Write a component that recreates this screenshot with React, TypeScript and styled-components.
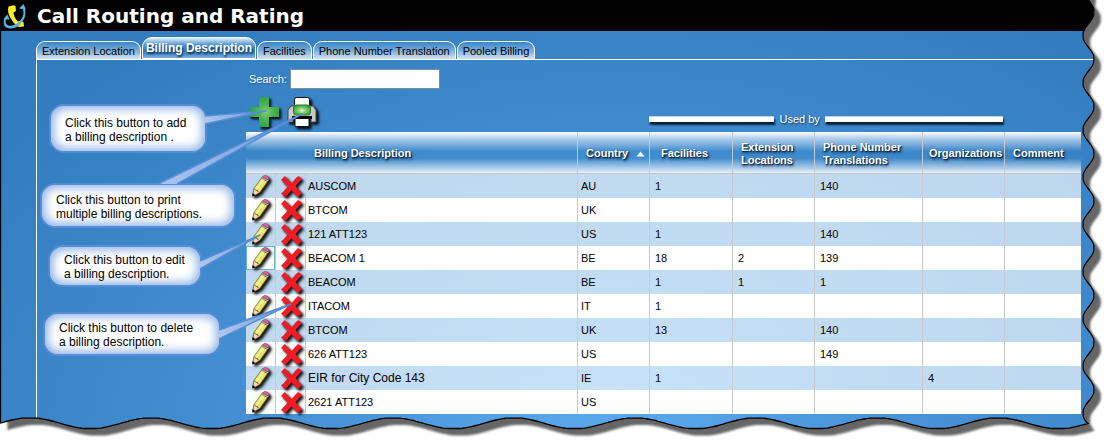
import React, { useLayoutEffect, useRef, useState } from "react";
import styled, { createGlobalStyle } from "styled-components";

const GlobalStyle = createGlobalStyle`
  * { box-sizing: border-box; }
  body { margin: 0; background: #fff; }
  body, button, input { font-family: "Liberation Sans", Arial, sans-serif; }
`;

/* ---------- page frame ---------- */

const Page = styled.main`
  position: relative;
  padding-bottom: 32px;
  overflow: hidden;
  background: radial-gradient(ellipse 68% 112% at 55% 100%, #5caaee 0%, #4a95d9 35%, #3e8acd 65%, #327dc0 100%);
`;

const TitleBar = styled.header`
  display: flex;
  align-items: center;
  gap: 10px;
  height: 31px;
  padding: 0 3px;
  background: #000;
`;

const Title = styled.h1`
  margin: 0;
  color: #fff;
  font: bold 20px/24px Verdana, "DejaVu Sans", sans-serif;
`;

const Tabs = styled.nav`
  display: flex;
  align-items: flex-end;
  gap: 1px;
  height: 28px;
  margin-left: 36px;
`;

const Tab = styled.a<{ $active?: boolean }>`
  height: ${(p) => (p.$active ? 22 : 18)}px;
  padding: ${(p) => (p.$active ? "2px 3px 0" : "1px 5px 0")};
  border: 1px solid #fff;
  border-bottom: ${(p) => (p.$active ? "1px solid #fff" : "0")};
  border-radius: ${(p) => (p.$active ? "10px 10px 0 0" : "9px 9px 0 0")};
  background: ${(p) =>
    p.$active
      ? "linear-gradient(#e4eef8 0%, #5c9bd4 32%, #2f78bb 65%, #7fb0de 100%)"
      : "linear-gradient(#3c85c6 0%, #72a7d8 45%, #d5e4f3 100%)"};
  color: ${(p) => (p.$active ? "#fff" : "#000")};
  font-size: ${(p) => (p.$active ? 12 : 11)}px;
  font-weight: ${(p) => (p.$active ? "bold" : "normal")};
  line-height: 16px;
  text-shadow: ${(p) => (p.$active ? "1px 2px 2px #0a2b50" : "none")};
  text-decoration: none;
  white-space: nowrap;
`;

const Panel = styled.section`
  margin-left: 36px;
  margin-bottom: -32px;
  padding: 9px 30px 32px 209px;
  border-top: 1px solid #fff;
  border-left: 1px solid #fff;
`;

/* ---------- search and actions ---------- */

const SearchRow = styled.form`
  display: flex;
  align-items: center;
  gap: 3px;
  padding-left: 3px;
`;

const SearchLabel = styled.label`
  color: #fff;
  font-size: 11px;
  text-shadow: 1px 1px 1px #2a5f94;
`;

const SearchInput = styled.input`
  width: 150px;
  height: 20px;
  padding: 1px 4px;
  border: 1px solid #7d8f9f;
  background: #fff;
  font-size: 11px;
`;

const Toolbar = styled.div`
  display: flex;
  align-items: flex-start;
  gap: 8px;
  height: 43px;
  padding: 8px 0 0 3px;
`;

const IconButton = styled.button`
  display: block;
  padding: 0;
  border: 0;
  background: none;
  svg { display: block; overflow: visible; }
`;

const UsedBy = styled.div`
  display: flex;
  align-items: center;
  gap: 5px;
  width: 354px;
  margin: 14px 78px 0 auto;
  color: #fff;
  font-size: 11px;
  line-height: 16px;
  text-shadow: 1px 1px 2px #0d2f52;
`;

const Bar = styled.span<{ $grow: number }>`
  flex: ${(p) => p.$grow} 1 0;
  height: 6px;
  border-top: 1px solid #b9d3ec;
  background: #fff;
  box-shadow: 1px 3px 2px #0a2138;
`;

/* ---------- table ---------- */

const Table = styled.table`
  width: 100%;
  border-collapse: separate;
  border-spacing: 0;
  table-layout: fixed;
  font-size: 11px;
`;

const HeadRow = styled.tr`
  height: 42px;
  background: linear-gradient(#ffffff 0%, rgba(255, 255, 255, 0.62) 14%, rgba(255, 255, 255, 0) 46%, rgba(255, 255, 255, 0) 62%, rgba(255, 255, 255, 0.62) 88%, #f4f8fc 100%);
`;

const HeadCell = styled.th<{ $indent?: number }>`
  padding: 2px 2px 0 ${(p) => p.$indent ?? 8}px;
  border-right: 1px solid #c3c9ce;
  border-bottom: 1px solid #c3c9ce;
  color: #fff;
  font-weight: bold;
  line-height: 13px;
  text-align: left;
  text-shadow: 1px 1px 1px #0b2440, 1px 2px 3px #0b2440;
  &:last-child { border-right: 0; }
`;

const SortHeading = styled.span`
  display: flex;
  align-items: center;
  justify-content: space-between;
  padding-right: 2px;
`;

const Row = styled.tr<{ $shaded: boolean }>`
  height: 24px;
  background: ${(p) => (p.$shaded ? "rgba(255, 255, 255, 0.67)" : "#fff")};
`;

const Cell = styled.td<{ $indent?: number; $size?: number }>`
  padding: 0 0 0 ${(p) => p.$indent ?? 5}px;
  border-right: 1px solid #c6cbcf;
  color: #000;
  font-size: ${(p) => p.$size ?? 11}px;
  line-height: 14px;
  white-space: nowrap;
  &:last-child { border-right: 0; }
`;

const IconCell = styled.td<{ $selected?: boolean }>`
  padding: 0 0 0 5px;
  border-right: 1px solid #c6cbcf;
  box-shadow: ${(p) => (p.$selected ? "inset 0 0 0 1px #69b7c6" : "none")};
`;

/* ---------- callouts ---------- */

const CalloutBox = styled.aside<{ $x: number; $y: number; $w: number; $h: number }>`
  position: absolute;
  left: ${(p) => p.$x}px;
  top: ${(p) => p.$y}px;
  width: ${(p) => p.$w}px;
  height: ${(p) => p.$h}px;
  padding: 2px 0 0 14px;
  display: flex;
  align-items: center;
  border: 2px solid #568cd8;
  border-radius: 15px;
  background: #fff;
  box-shadow: inset 0 0 10px 3px #8fb3e6;
  color: #000;
  font-size: 12px;
  line-height: 14px;
  white-space: pre-line;
  pointer-events: none;
  svg {
    position: absolute;
    left: -2px;
    top: -2px;
    width: 1px;
    height: 1px;
    overflow: visible;
  }
`;

type Point = [number, number];

function Callout({ x, y, w, h, base, tip, text }: {
  x: number; y: number; w: number; h: number; base: [Point, Point]; tip: Point; text: string;
}) {
  const [a, b] = base;
  const id = `tail-${x}-${y}`;
  const edge = `M${a[0]} ${a[1]}L${tip[0]} ${tip[1]}L${b[0]} ${b[1]}`;
  return (
    <CalloutBox $x={x} $y={y} $w={w} $h={h}>
      <svg aria-hidden="true">
        <defs>
          <linearGradient id={id} gradientUnits="userSpaceOnUse" x1={a[0]} y1={a[1]} x2={tip[0]} y2={tip[1]}>
            <stop offset="0" stopColor="#adc7ed" />
            <stop offset="0.6" stopColor="#84a9e1" />
            <stop offset="1" stopColor="#4f86d6" />
          </linearGradient>
        </defs>
        <path d={edge + "Z"} fill={`url(#${id})`} />
        <path d={edge} fill="none" stroke="#568cd8" strokeWidth="1.5" strokeLinejoin="round" />
      </svg>
      <span>{text}</span>
    </CalloutBox>
  );
}

/* ---------- torn paper edge ---------- */

const TornLayer = styled.svg`
  position: absolute;
  inset: 0;
  width: 100%;
  height: 100%;
  pointer-events: none;
`;

/* Cosine wave with flattened crests, from -1 to 1, with a crest at t = peak. */
function wave(t: number, peak: number, period: number, clip: number) {
  const c = Math.cos(((t - peak) / period) * 2 * Math.PI);
  return Math.max(-clip, Math.min(clip, c)) / clip;
}

function tornOutline(w: number, h: number) {
  const cornerX = w - 23;
  const cornerY = h - 23;
  const points: string[] = ["0.5 -20"];
  points.push(`${w - 21} -20`);
  for (let y = 0; y < cornerY; y += 1) {
    points.push(`${(w - 22.5 + 5.3 * wave(y, 12, 47.2, 0.92)).toFixed(1)} ${y}`);
  }
  for (let x = cornerX; x > 0; x -= 2) {
    points.push(`${x} ${(h - 22.7 - 5.2 * wave(x, 30, 121, 0.94)).toFixed(1)}`);
  }
  points.push(`0.5 ${cornerY}`);
  return `M${points.join("L")}Z`;
}

function TornEdge() {
  const ref = useRef<SVGSVGElement>(null);
  const [size, setSize] = useState({ w: 0, h: 0 });
  useLayoutEffect(() => {
    const node = ref.current;
    if (!node) return;
    const measure = () => {
      const r = node.getBoundingClientRect();
      setSize({ w: Math.round(r.width), h: Math.round(r.height) });
    };
    measure();
    const observer = new ResizeObserver(measure);
    observer.observe(node);
    return () => observer.disconnect();
  }, []);
  const { w, h } = size;
  const outline = w ? tornOutline(w, h) : "";
  const outside = `M0 -30H${w}V${h}H0Z${outline}`;
  return (
    <TornLayer ref={ref} aria-hidden="true">
      {w > 0 && (
        <>
          <defs>
            <clipPath id="outside"><path d={outside} clipRule="evenodd" /></clipPath>
            <filter id="soft" x="-5%" y="-5%" width="110%" height="110%"><feGaussianBlur stdDeviation="1.2" /></filter>
          </defs>
          <path d={outside} fill="#fff" fillRule="evenodd" />
          <g clipPath="url(#outside)">
            <path d={outline} transform="translate(7 7)" fill="#666" filter="url(#soft)" />
          </g>
          <path d={outline} fill="none" stroke="#000" strokeWidth="1.3" />
        </>
      )}
    </TornLayer>
  );
}

/* ---------- icons ---------- */

const Shadowed = styled.svg`
  display: block;
  overflow: visible;
  filter: drop-shadow(2px 2px 1px rgba(0, 0, 0, 0.85)) drop-shadow(1px 1px 1px rgba(0, 0, 0, 0.35));
`;

const Logo = () => (
  <svg width="24" height="26" viewBox="0 0 24 26" aria-hidden="true">
    <path d="M5.500 3.500C4.500 7 5 11 7.500 15C9.500 18.500 12 21.500 15.500 24L21 23.500L20.500 19L17.500 17.500L15 18.500C12.500 16.500 10.800 13 10.500 9.500L13 8L12.500 3L10 2.200Z" fill="#f7ea2c" />
    <path d="M3.500 14.500C0.500 18 1 22.500 5.500 23.500C11 24.500 18 20.500 20.500 14.500C22 11 21.500 7.500 20.500 4.500" fill="none" stroke="#59b4df" strokeWidth="2" />
    <path d="M0.500 16L4.500 11.500L6.500 16.500Z M16 5.500L20.500 1L23 6.500Z" fill="#59b4df" />
    <path d="M1.500 22C5 26 12.500 25.500 17 20.500" fill="none" stroke="#59b4df" strokeWidth="1.500" />
  </svg>
);

const PlusIcon = () => (
  <Shadowed width="30" height="30" viewBox="0 0 30 30" aria-hidden="true">
    <defs>
      <radialGradient id="plus" cx="0.55" cy="0.5" r="0.55">
        <stop offset="0" stopColor="#86cd78" />
        <stop offset="0.45" stopColor="#4cb550" />
        <stop offset="1" stopColor="#27a34b" />
      </radialGradient>
    </defs>
    <path d="M10 0H20V10H30V20H20V30H10V20H0V10H10Z" fill="url(#plus)" />
  </Shadowed>
);

const PrinterIcon = () => (
  <Shadowed width="30" height="30" viewBox="0 0 30 30" aria-hidden="true">
    <defs>
      <radialGradient id="lamp" cx="0.5" cy="0.55" r="0.6">
        <stop offset="0" stopColor="#e4f6dc" />
        <stop offset="0.4" stopColor="#85ce6b" />
        <stop offset="1" stopColor="#2f9b34" />
      </radialGradient>
    </defs>
    <path d="M4 9H26L29 13V25H24V20H6V25H1V13Z" fill="#c9c9cb" stroke="#4a4a4d" />
    <rect x="7.500" y="0.500" width="15" height="9" rx="2" fill="#fff" stroke="#111" />
    <rect x="6.500" y="8" width="17" height="10" rx="3" fill="url(#lamp)" stroke="#2a7a2d" />
    <rect x="5" y="19" width="20" height="3" fill="#000" />
    <rect x="8" y="21.500" width="14" height="8" rx="1" fill="#fff" stroke="#111" />
  </Shadowed>
);

const PencilIcon = () => (
  <Shadowed width="20" height="22" viewBox="0 0 20 22" aria-hidden="true">
    <path d="M3 13.500L8.500 17.500L3.500 20.500L1.800 19.500Z" fill="#f5d3b0" stroke="#6e5a3a" strokeWidth="0.800" />
    <path d="M3 13.500L10.500 3L16.500 6.500L8.700 17.500C7 17.200 7 16 6.500 15.500C5.500 15.500 4 15 3 13.500Z" fill="#eae567" stroke="#77722a" strokeWidth="0.800" />
    <path d="M5.500 14L12.800 4.500" stroke="#fbf8b0" strokeWidth="1.500" />
    <path d="M10.500 3.200L11.800 1.600L17.800 5L16.600 6.800Z" fill="#a9b2b4" stroke="#555" strokeWidth="0.500" />
    <path d="M11.600 2C12.500 0.300 14.200 0 16 1C18 2.200 18.500 3.500 17.600 5.300Z" fill="#e0679b" stroke="#7d3b56" strokeWidth="0.600" />
    <path d="M1.600 18L4.500 20.200L1.200 21.600Z" fill="#000" />
  </Shadowed>
);

const DeleteIcon = () => (
  <Shadowed width="21" height="21" viewBox="0 0 21 21" aria-hidden="true">
    <path d="M3.800 0C6 2.500 8 5 10.500 7C13 4.500 14.500 2 17.500 0L21 3C18.500 5.500 16.500 7.500 14.500 10.200C16.500 12.500 18.500 15 21 17L17 21C14.500 19 12.500 16.500 10.300 14.200C8.500 16.500 6.500 19 4 21L0 17.500C2.500 15.500 4.500 13 6.500 10.500C4.500 8 2.500 6 0 4Z" fill="#ee1c24" />
  </Shadowed>
);

const SortIcon = () => (
  <svg width="9" height="6" viewBox="0 0 9 6" aria-hidden="true">
    <path d="M4.500 0.500L8.500 5.500H0.500Z" fill="#fff" />
  </svg>
);

/* ---------- data ---------- */

type Billing = {
  name: string; country: string; facilities?: string; extensions?: string;
  translations?: string; organizations?: string; selected?: boolean; large?: boolean;
};

const rows: Billing[] = [
  { name: "AUSCOM", country: "AU", facilities: "1", translations: "140" },
  { name: "BTCOM", country: "UK" },
  { name: "121 ATT123", country: "US", facilities: "1", translations: "140" },
  { name: "BEACOM 1", country: "BE", facilities: "18", extensions: "2", translations: "139", selected: true },
  { name: "BEACOM", country: "BE", facilities: "1", extensions: "1", translations: "1" },
  { name: "ITACOM", country: "IT", facilities: "1" },
  { name: "BTCOM", country: "UK", facilities: "13", translations: "140" },
  { name: "626 ATT123", country: "US", translations: "149" },
  { name: "EIR for City Code 143", country: "IE", facilities: "1", organizations: "4", large: true },
  { name: "2621 ATT123", country: "US" },
];

const tabs = ["Extension Location", "Billing Description", "Facilities", "Phone Number Translation", "Pooled Billing"];
const columnWidths = [30, 30, undefined, 72, 83, 82, 108, 82, 76];

export default function App() {
  return (
    <>
      <GlobalStyle />
      <Page>
        <TitleBar>
          <Logo />
          <Title>Call Routing and Rating</Title>
        </TitleBar>
        <Tabs>
          {tabs.map((t) => (
            <Tab key={t} href="#" $active={t === "Billing Description"}>{t}</Tab>
          ))}
        </Tabs>
        <Panel>
          <SearchRow>
            <SearchLabel htmlFor="search">Search:</SearchLabel>
            <SearchInput id="search" type="text" />
          </SearchRow>
          <Toolbar>
            <IconButton type="button" aria-label="Add billing description"><PlusIcon /></IconButton>
            <IconButton type="button" aria-label="Print billing descriptions"><PrinterIcon /></IconButton>
            <UsedBy>
              <Bar $grow={126} />
              Used by
              <Bar $grow={179} />
            </UsedBy>
          </Toolbar>
          <Table>
            <colgroup>
              {columnWidths.map((w, i) => <col key={i} width={w} />)}
            </colgroup>
            <thead>
              <HeadRow>
                <HeadCell colSpan={3} $indent={68}>Billing Description</HeadCell>
                <HeadCell><SortHeading>Country <SortIcon /></SortHeading></HeadCell>
                <HeadCell $indent={11}>Facilities</HeadCell>
                <HeadCell>Extension Locations</HeadCell>
                <HeadCell>Phone Number Translations</HeadCell>
                <HeadCell $indent={6}>Organizations</HeadCell>
                <HeadCell>Comment</HeadCell>
              </HeadRow>
            </thead>
            <tbody>
              {rows.map((r, i) => (
                <Row key={i} $shaded={i % 2 === 0}>
                  <IconCell $selected={r.selected}>
                    <IconButton type="button" aria-label={`Edit ${r.name}`}><PencilIcon /></IconButton>
                  </IconCell>
                  <IconCell>
                    <IconButton type="button" aria-label={`Delete ${r.name}`}><DeleteIcon /></IconButton>
                  </IconCell>
                  <Cell $indent={2} $size={r.large ? 12 : 11}>{r.name}</Cell>
                  <Cell $indent={3}>{r.country}</Cell>
                  <Cell>{r.facilities}</Cell>
                  <Cell>{r.extensions}</Cell>
                  <Cell>{r.translations}</Cell>
                  <Cell>{r.organizations}</Cell>
                  <Cell />
                </Row>
              ))}
            </tbody>
          </Table>
        </Panel>
        <Callout x={49} y={104} w={158} h={49} base={[[156, 12], [156, 20]]} tip={[217, 7]}
          text={"Click this button to add\na billing description ."} />
        <Callout x={40} y={183} w={196} h={45} base={[[118, 1], [137, 1]]} tip={[262, -69]}
          text={"Click this button to print\nmultiple billing descriptions."} />
        <Callout x={48} y={245} w={154} h={42} base={[[152, 16], [152, 24]]} tip={[212, -10]}
          text={"Click this button to edit\na billing description."} />
        <Callout x={43} y={312} w={178} h={44} base={[[176, 18], [176, 27]]} tip={[248, -8]}
          text={"Click this button to delete\na billing description."} />
        <TornEdge />
      </Page>
    </>
  );
}
